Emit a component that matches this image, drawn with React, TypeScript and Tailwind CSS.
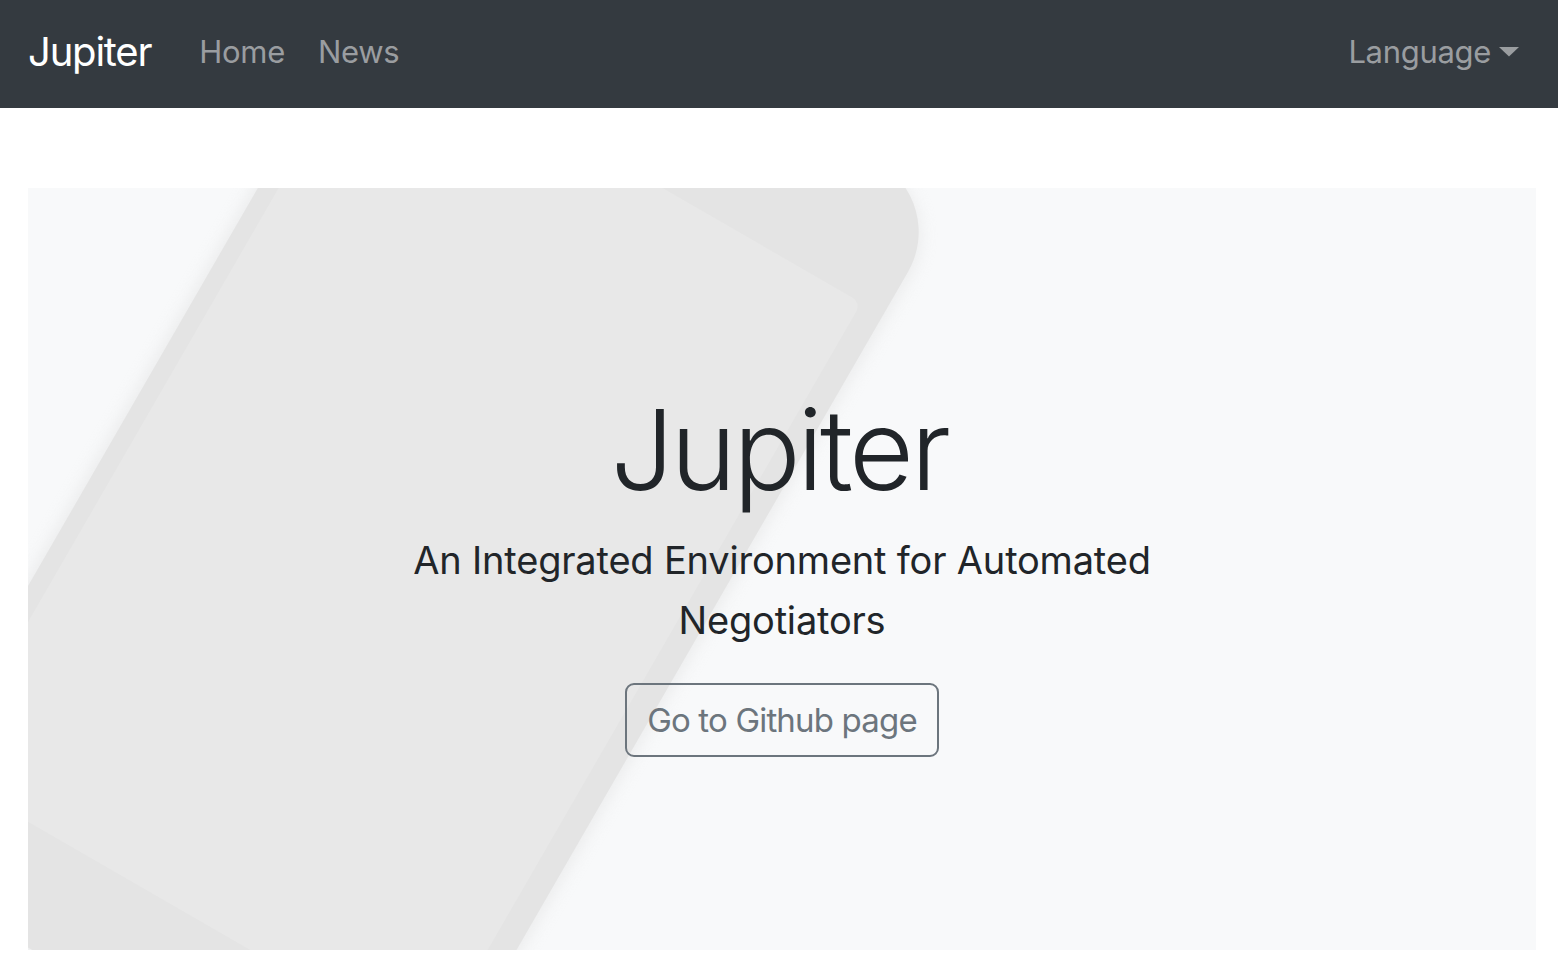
export default function App() {
  return (
    <div className="min-h-[970px] bg-white font-['Inter','Noto_Sans',sans-serif]">
      <nav className="h-[108px] bg-[#343a40] flex items-center pl-[28px] pr-[39px] pb-[5px]">
        <span className="text-[40px] leading-none text-white tracking-[-0.03em] mr-[48px]">Jupiter</span>
        <span className="text-[31px] leading-none text-[#9a9da0] tracking-[-0.01em] mr-[33px]">Home</span>
        <span className="text-[31px] leading-none text-[#9a9da0] tracking-[-0.01em]">News</span>
        <div className="ml-auto flex items-center">
          <span className="text-[31px] leading-none text-[#9a9da0] tracking-[-0.01em]">Language</span>
          <svg width="20" height="10" viewBox="0 0 20 10" className="ml-[8px]">
            <polygon points="0,0 20,0 10,9.5" fill="#9a9da0" />
          </svg>
        </div>
      </nav>
      <main className="mt-[80px] ml-[28px] mr-[22px] h-[762px] bg-[#f8f9fa] relative overflow-hidden">
        <svg className="absolute inset-0" width="1508" height="762" viewBox="0 0 1508 762">
          <defs>
            <filter id="sh" x="-20%" y="-20%" width="140%" height="140%">
              <feGaussianBlur stdDeviation="8" />
            </filter>
          </defs>
          <g transform="translate(396,-287.8) rotate(30)">
            <rect x="-4" y="0" width="613" height="1109" rx="84" fill="#dcdcdc" opacity="0.45" filter="url(#sh)" />
            <rect x="0" y="0" width="605" height="1105" rx="80" fill="#e4e4e4" />
            <rect x="18" y="130" width="562" height="866" rx="10" fill="#e8e8e8" />
          </g>
        </svg>
        <div className="relative flex flex-col items-center pt-[205px]">
          <h1 className="text-[112px] leading-none font-light text-[#212529] tracking-[-0.03em] -ml-[6px]">Jupiter</h1>
          <p className="mt-[25px] text-[38px] leading-[60px] font-normal text-[#212529] text-center tracking-[-0.005em]">
            An Integrated Environment for Automated
            <br />
            Negotiators
          </p>
          <div className="mt-[33px] w-[314px] h-[74px] border-2 border-[#6c757d] rounded-[9px] flex items-center justify-center whitespace-nowrap text-[33px] leading-none font-normal text-[#6c757d] tracking-[-0.025em]">
            Go to Github page
          </div>
        </div>
      </main>
    </div>
  );
}
